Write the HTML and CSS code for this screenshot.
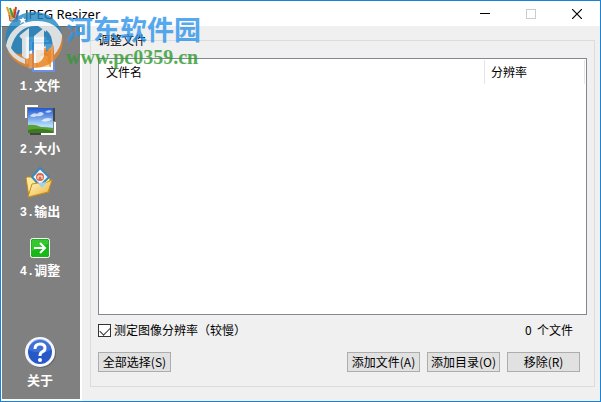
FILE: index.html
```html
<!DOCTYPE html>
<html lang="zh-CN">
<head>
    <meta charset="UTF-8">
    <meta name="viewport" content="width=device-width, initial-scale=1.0">
    <title>JPEG Resizer</title>
    <link rel="stylesheet" href="styles.css">
</head>
<body>
    <div class="window">
        <header class="titlebar">
            <svg class="app-icon" width="14" height="16" viewBox="0 0 14 16">
                <path d="M2 6h10l-1 9H4z" fill="#b8c0d8"/>
                <path d="M1 1l4 12M8 3L6 13" stroke="#e8a020" stroke-width="2"/>
                <path d="M4 2l3 9" stroke="#3a9a48" stroke-width="2"/>
                <path d="M10 1L8 12" stroke="#d03a20" stroke-width="2"/>
                <path d="M13 4l-3 9" stroke="#3468b8" stroke-width="2"/>
                <path d="M3 9l1 6h7l1-6" fill="none" stroke="#c0522c"/>
            </svg>
            <h1>JPEG Resizer</h1>
            <div class="window-buttons">
                <button type="button" aria-label="最小化">
                    <svg width="10" height="10" viewBox="0 0 10 10"><path d="M0 4.5h10" stroke="#000"/></svg>
                </button>
                <button type="button" aria-label="最大化" disabled>
                    <svg width="10" height="10" viewBox="0 0 10 10"><rect x=".5" y=".5" width="9" height="9" fill="none" stroke="#ccc"/></svg>
                </button>
                <button type="button" aria-label="关闭">
                    <svg width="10" height="10" viewBox="0 0 10 10"><path d="M0 0l10 10M10 0L0 10" stroke="#000" stroke-width="1.2"/></svg>
                </button>
            </div>
        </header>

        <div class="content">
            <nav class="sidebar">
                <button type="button" class="step">
                    <svg width="32" height="32" viewBox="0 0 32 32">
                        <rect x="2" y="-4" width="20" height="27" fill="#fff" stroke="#a4c0ee"/>
                        <rect x="5" y="-1" width="20" height="28" fill="#f4f8ff" stroke="#8eb0e8"/>
                        <rect x="9" y="2" width="21" height="28" fill="#fff" stroke="#6a90e0" stroke-width="2"/>
                        <rect x="12" y="9" width="15" height="17" fill="#f2a050"/>
                        <path d="M14 26v-4l3-2-1-5 3-3h3l2 3-1 5 3 6z" fill="#fbd8a8"/>
                        <path d="M15 16l2-4h5l3 4-4-2z" fill="#c87030"/>
                    </svg>
                    <span>1.</span>文件
                </button>
                <button type="button" class="step">
                    <svg width="32" height="32" viewBox="0 0 32 32">
                        <defs>
                            <linearGradient id="sky" x2="0" y2="1">
                                <stop offset="0" stop-color="#1f58d0"/>
                                <stop offset=".7" stop-color="#b4dcfc"/>
                            </linearGradient>
                        </defs>
                        <path d="M19 5h11v12M6 30h12" fill="none" stroke="#444" stroke-width="2"/>
                        <path d="M2 14V2h12M31 18v12H17" fill="none" stroke="#fff" stroke-width="2"/>
                        <rect x="4" y="4" width="25" height="25" fill="url(#sky)"/>
                        <path d="M6 12q3-4 7-2 4-4 7 0-3 3-7 2-4 2-7 0M17 17q5-5 11-2-4 4-11 2M21 8q3-3 7-1-3 3-7 1" fill="#fff" opacity=".7"/>
                        <path d="M4 21q7-1 13 2 6 0 12 1v5H4z" fill="#5ea034"/>
                        <path d="M4 26q11-3 25 1v2H4z" fill="#3c7c20"/>
                    </svg>
                    <span>2.</span>大小
                </button>
                <button type="button" class="step">
                    <svg width="32" height="32" viewBox="0 0 32 32">
                        <defs>
                            <linearGradient id="folder" x2="1" y2="1">
                                <stop offset="0" stop-color="#fffbc8"/>
                                <stop offset="1" stop-color="#eeb038"/>
                            </linearGradient>
                        </defs>
                        <path d="M2 11l1-1h6l3 3 14-2-1 14-20 5z" fill="#ffe898" stroke="#c08a20"/>
                        <path d="M16 1l9 9-9 9-8-9z" fill="#e8f6ff" stroke="#3c88b8" stroke-width="2"/>
                        <circle cx="16" cy="10" r="4" fill="#e06848"/>
                        <path d="M14 12V9h4v3" fill="none" stroke="#fff"/>
                        <path d="M4 30l4-13 6-1 3 2 11-5-4 12z" fill="url(#folder)" stroke="#c88e1c"/>
                        <path d="M14 16l9-1-5 6z" fill="#9cd4ee"/>
                    </svg>
                    <span>3.</span>输出
                </button>
                <button type="button" class="step step-run">
                    <svg width="20" height="20" viewBox="0 0 20 20">
                        <rect x=".5" y=".5" width="19" height="19" rx="2" fill="#18b818" stroke="#fff"/>
                        <path d="M2 2h16v4L2 13z" fill="#4ad040" opacity=".6"/>
                        <path d="M4 10h11M10 5l5 5-5 5" fill="none" stroke="#fff" stroke-width="2"/>
                    </svg>
                    <span>4.</span>调整
                </button>
                <button type="button" class="step step-about">
                    <svg width="32" height="32" viewBox="0 0 32 32">
                        <circle cx="17" cy="17" r="15" fill="#666"/>
                        <circle cx="16" cy="16" r="15" fill="#f6f8ff"/>
                        <circle cx="16" cy="16" r="12" fill="#2858c8"/>
                        <path d="M5 14a11 11 0 0 1 22 0q-10 5-22 0" fill="#4c80e0" opacity=".6"/>
                        <path d="M11 13q0-5 5-5t5 4q0 3-3 4-2 1-2 4" fill="none" stroke="#fff" stroke-width="3"/>
                        <circle cx="16" cy="24" r="2" fill="#fff"/>
                    </svg>
                    关于
                </button>
            </nav>

            <main>
                <fieldset class="files">
                    <legend>调整文件</legend>
                    <div class="list">
                        <table>
                            <thead>
                                <tr><th class="col-name">文件名</th><th class="col-size">分辨率</th></tr>
                            </thead>
                            <tbody></tbody>
                        </table>
                    </div>
                    <div class="options">
                        <input type="checkbox" id="measure" checked>
                        <label for="measure">测定图像分辨率（较慢）</label>
                        <span class="count">0&nbsp; 个文件</span>
                    </div>
                    <div class="actions">
                        <button type="button" class="btn btn-all">全部选择(S)</button>
                        <button type="button" class="btn">添加文件(A)</button>
                        <button type="button" class="btn">添加目录(O)</button>
                        <button type="button" class="btn">移除(R)</button>
                    </div>
                </fieldset>
            </main>
        </div>

        <!-- Site mark over the top left corner -->
        <div class="watermark">
            <svg width="58" height="56" viewBox="0 0 58 56">
                <path d="M2 36C-4 17 9 0 29 0c14 0 25 8 28 22L42 34 14 42z" fill="#1f86c4"/>
                <path d="M57 22c4 18-9 34-28 34C18 56 8 50 3 40c12 3 22 4 32-2 8-4 18-8 22-16z" fill="#ea8426"/>
                <path d="M1 34C4 17 18 8 33 9c11 0 20 5 24 14 0 8-3 15-8 20 1-11-3-21-16-29C20 13 10 20 6 36q5 8 14 11v5Q6 47 1 34z" fill="#f4f7f8"/>
                <path d="M14 24l10-8v30q-4 2-7-2V27zM29 24l10-8v28q-3 8-10 7z" fill="#f4f7f8"/>
                <path d="M9 33q2-8 7-12l-3 6v8zM26 21l4-3v3l-4 4zM41 18q7 5 6 16l-6 6z" fill="#1f86c4"/>
                <path d="M18 5l1 2h2l-1 2 1 3-3-2-3 2 1-3-2-2h3z" fill="#fff"/>
            </svg>
            <div class="mark-text">
                <p class="mark-name">河东软件园</p>
                <p class="mark-url">www.pc0359.cn</p>
            </div>
        </div>
    </div>
</body>
</html>
```

FILE: styles.css
```css
* {
    box-sizing: border-box;
}
body {
    margin: 0;
    font-family: "Noto Sans CJK SC", sans-serif;
    font-size: 12px;
    line-height: 14px;
    color: #000;
}
button {
    font-family: inherit;
    font-size: 12px;
    line-height: 14px;
}
.window {
    position: relative;
    display: flex;
    flex-direction: column;
    min-height: 100vh;
    border: 1px solid #1883d7;
    background: #f0f0f0;
}

/* Title bar */
.titlebar {
    display: flex;
    align-items: center;
    height: 25px;
    padding-left: 5px;
    background: #fff;
}
h1 {
    margin: 0 0 0 5px;
    font-family: "Noto Sans", sans-serif;
    font-size: 13px;
    font-weight: normal;
}
.window-buttons {
    display: flex;
    margin-left: auto;
}
.window-buttons button {
    display: flex;
    align-items: center;
    justify-content: center;
    width: 46px;
    height: 25px;
    padding: 0;
    border: none;
    background: none;
}

/* Steps on the left */
.content {
    display: flex;
    flex: 1;
}
.sidebar {
    display: flex;
    flex-direction: column;
    gap: 11px;
    width: 81px;
    padding: 14px 2px 12px 0;
    background: #808080;
    border: 1px solid #fff;
    border-top-color: #696969;
    border-right-width: 2px;
    border-bottom-width: 2px;
}
.step {
    padding: 0;
    border: none;
    background: none;
    color: #fff;
    font-size: 13px;
    font-weight: bold;
}
.step svg {
    display: block;
    margin: 0 auto 5px;
    overflow: visible;
}
.step span {
    font-family: "Liberation Mono", monospace;
    font-size: 12px;
    line-height: 12px;
}
.step-run {
    margin-top: 8px;
}
.step-about {
    margin-top: auto;
}

/* File list */
main {
    display: flex;
    flex: 1;
    min-width: 0;
    padding: 7px 5px 14px 8px;
}
.files {
    display: flex;
    flex-direction: column;
    flex: 1;
    min-width: 0;
    margin: 0;
    padding: 11px 7px 14px;
    border: 1px solid #dcdcdc;
}
legend {
    padding: 0;
}
.list {
    flex: 1;
    padding: 1px;
    border: 1px solid #828790;
    background: #fff;
}
table {
    width: 100%;
    border-collapse: collapse;
    table-layout: fixed;
}
th {
    height: 24px;
    padding: 0 6px;
    border-right: 1px solid #e5e5e5;
    font-weight: normal;
    text-align: left;
}
.col-size {
    width: 100px;
}
.options {
    display: flex;
    align-items: center;
    margin-top: 8px;
}
.options input {
    appearance: none;
    width: 13px;
    height: 13px;
    margin: 0 3px 0 0;
    border: 1px solid #333;
    background: #fff;
}
.options input:checked::before {
    content: "";
    display: block;
    width: 9px;
    height: 5px;
    margin: 2px 1px;
    border: solid #333;
    border-width: 0 0 1px 1px;
    transform: rotate(-45deg);
}
.count {
    margin-left: auto;
    padding-right: 14px;
}
.actions {
    display: flex;
    gap: 7px;
    margin-top: 15px;
    padding-right: 7px;
}
.btn {
    width: 73px;
    height: 20px;
    padding: 0;
    border: 1px solid #adadad;
    background: #e1e1e1;
    color: #000;
    white-space: nowrap;
}
.btn-all {
    margin-right: auto;
}

/* Site mark */
.watermark {
    position: absolute;
    top: 11px;
    left: 4px;
    display: flex;
    gap: 3px;
    opacity: 0.8;
    pointer-events: none;
}
.watermark p {
    margin: 0;
    font-weight: bold;
}
.mark-name {
    color: #2c94ea;
    font-size: 27px;
    line-height: 34px;
}
.mark-url {
    color: #2f9a2f;
    font-family: "Liberation Serif", serif;
    font-size: 20px;
    line-height: 22px;
}
```
